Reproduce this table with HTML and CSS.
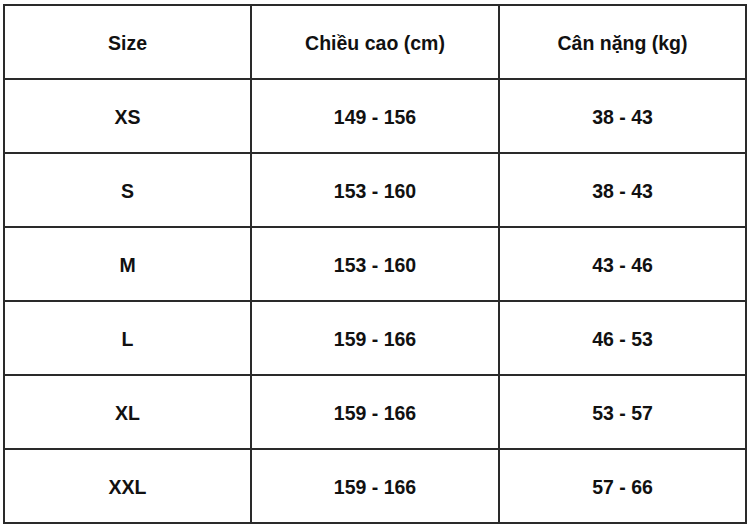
FILE: index.html
```html
<!DOCTYPE html>
<html lang="vi">
<head>
<meta charset="utf-8">
<link rel="stylesheet" href="styles.css">
</head>
<body>
<div class="page">
  <div class="chart">
    <div class="cell head">Size</div>
    <div class="cell head">Chiều cao (cm)</div>
    <div class="cell head">Cân nặng (kg)</div>

    <div class="cell">XS</div>
    <div class="cell">149 - 156</div>
    <div class="cell">38 - 43</div>

    <div class="cell">S</div>
    <div class="cell">153 - 160</div>
    <div class="cell">38 - 43</div>

    <div class="cell">M</div>
    <div class="cell">153 - 160</div>
    <div class="cell">43 - 46</div>

    <div class="cell">L</div>
    <div class="cell">159 - 166</div>
    <div class="cell">46 - 53</div>

    <div class="cell">XL</div>
    <div class="cell">159 - 166</div>
    <div class="cell">53 - 57</div>

    <div class="cell">XXL</div>
    <div class="cell">159 - 166</div>
    <div class="cell">57 - 66</div>
  </div>
</div>
</body>
</html>
```

FILE: styles.css
```css
html, body {
  margin: 0;
  padding: 0;
  background: #ffffff;
}

.page {
  padding: 4px 0 0 3px;
}

.chart {
  display: grid;
  grid-template-columns: 245px 246px 245px;
  grid-auto-rows: 72px;
  gap: 2px;
  padding: 2px;
  width: max-content;
  background: #2a2a2a;
  font-family: "Liberation Sans", Arial, sans-serif;
  color: #111111;
}

.cell {
  background: #ffffff;
  display: flex;
  align-items: center;
  justify-content: center;
  padding-top: 2px;
  font-size: 19.5px;
  font-weight: 700;
}

.head {
  font-weight: 700;
}
```
